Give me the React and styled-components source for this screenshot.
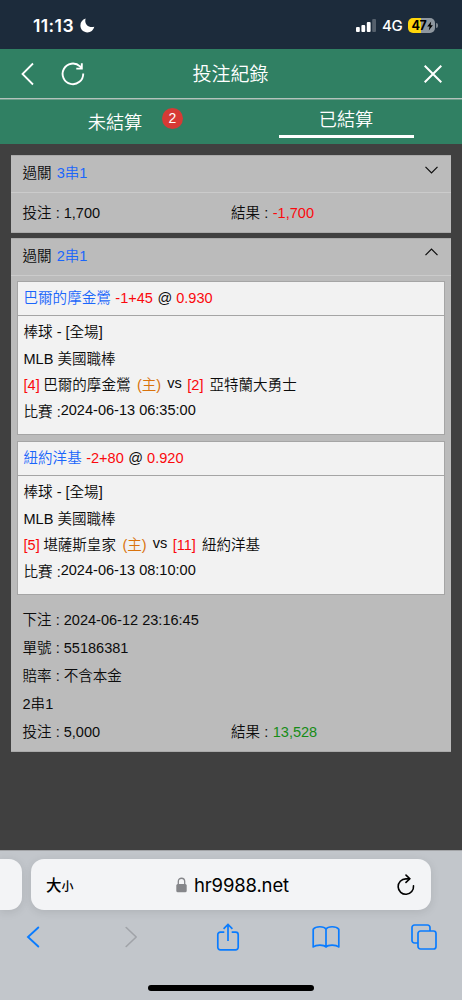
import React from 'react'
import styled, { createGlobalStyle } from 'styled-components'

let GlobalStyle = createGlobalStyle`
  * {
    box-sizing: border-box;
  }

  body {
    margin: 0;
    background: #404040;
    font-family: 'Liberation Sans', 'Noto Sans CJK TC', sans-serif;
    font-size: 14.55px;
    font-weight: 350;
    color: #0c0c0c;
  }

  svg {
    display: block;
    flex: none;
  }
`

let Screen = styled.div`
  width: 462px;
  height: 1000px;
  display: flex;
  flex-direction: column;
  overflow: hidden;
`

/* status bar */

let StatusBar = styled.div`
  height: 49px;
  flex: none;
  padding: 2px 24px 0 33px;
  display: flex;
  align-items: center;
  background: #1c2b3b;
  color: #fff;
  font-family: Inter, sans-serif;
`

let Clock = styled.div`
  width: 46.5px;
  font-size: 17.5px;
  font-weight: 600;
  letter-spacing: 0.4px;
`

let StatusRight = styled.div`
  margin-left: auto;
  display: flex;
  align-items: center;
`

let Network = styled.div`
  width: 26px;
  margin-left: 6px;
  font-size: 15px;
  font-weight: 500;
  letter-spacing: -0.4px;
`

let Battery = styled.div`
  width: 27px;
  height: 15px;
  padding-left: 1px;
  border-radius: 5px;
  display: flex;
  align-items: center;
  justify-content: center;
  background: linear-gradient(90deg, #ffd60a 47%, #8e979f 47%);
  color: #000;
  font-size: 12.5px;
  font-weight: 700;
  letter-spacing: -0.3px;
`

let BatteryTip = styled.div`
  width: 2px;
  height: 5px;
  margin-left: 1px;
  border-radius: 0 2px 2px 0;
  background: #7a848d;
`

/* page header */

let Header = styled.div`
  height: 50px;
  flex: none;
  padding: 0 20px 0 21px;
  display: grid;
  grid-template-columns: 1fr auto 1fr;
  align-items: center;
  background: #308063;
  border-bottom: 1px solid #b4c2bc;
  color: #fff;
`

let HeaderLeft = styled.div`
  display: flex;
  gap: 27px;
`

let HeaderRight = styled.div`
  display: flex;
  justify-content: flex-end;
`

let Title = styled.div`
  padding: 3px 2px 0 0;
  font-size: 19px;
  line-height: 24px;
`

let Tabs = styled.div`
  height: 45px;
  flex: none;
  display: grid;
  grid-template-columns: 1fr 1fr;
  background: #308063;
  border-top: 1px solid #6a9f8a;
  color: #fff;
  font-size: 18.2px;
`

let Tab = styled.div`
  position: relative;
  padding-top: ${p => p.$top}px;
  line-height: 24px;
  text-align: center;
`

let TabLabel = styled.div`
  padding-right: 1px;
`

let Badge = styled.div`
  position: absolute;
  top: 8px;
  left: 162px;
  width: 21px;
  height: 21px;
  border-radius: 50%;
  background: #d63a35;
  font-size: 14px;
  line-height: 21px;
`

let Underline = styled.div`
  width: 135px;
  height: 3px;
  margin: 3px auto 0;
  background: #fff;
`

/* bet cards */

let List = styled.div`
  flex: 1;
  padding: 11px 11px 0;
  display: flex;
  flex-direction: column;
  gap: 5px;
`

let Card = styled.div`
  height: ${p => p.$height}px;
  flex: none;
  background: #bbb;
  border: 1px solid #aaa;
  border-width: 1px 0;
`

let CardHeader = styled.div`
  height: 37px;
  padding: 0 13px 0 11.5px;
  display: flex;
  justify-content: space-between;
  border-bottom: 1px solid #cbcbcb;
  line-height: 35px;
`

let Arrow = styled.div`
  padding-top: 9.5px;
`

let Line = styled.div`
  height: ${p => p.$height}px;
  padding: 0 ${p => p.$pad || 0}px;
  line-height: ${p => p.$height}px;
  display: flex;
  white-space: pre;
`

let Half = styled.div`
  width: 208.5px;
`

let Text = styled.span`
  color: ${p => p.$color || 'inherit'};
  margin-left: ${p => p.$gap || 0}px;
  margin-top: ${p => -(p.$lift || 0)}px;
`

let Summary = styled.div`
  padding-top: 12px;
`

let Matches = styled.div`
  padding: 5.5px 6px 0;
  display: flex;
  flex-direction: column;
  gap: 6px;
`

let Match = styled.div`
  height: 154px;
  background: #f2f2f2;
  border: 1px solid #a5a5a5;
`

let MatchHeader = styled.div`
  height: 34px;
  padding: 0 5.5px;
  border-bottom: 1px solid #a5a5a5;
`

let MatchBody = styled.div`
  padding: 2.8px 5.5px;
`

/* browser chrome */

let Browser = styled.div`
  height: 150px;
  flex: none;
  padding-top: 8px;
  border-top: 1px solid #a2a4a7;
  background: #c2c6cb;
`

let AddressRow = styled.div`
  height: 51px;
  display: flex;
  gap: 9px;
`

let PreviousPage = styled.div`
  width: 22px;
  height: 51px;
  border-radius: 0 13px 13px 0;
  background: #f3f4f6;
  box-shadow: 0 2px 10px rgba(0, 0, 0, 0.1);
`

let Address = styled.div`
  width: 400px;
  height: 51px;
  padding: 0 16px 0 15px;
  border-radius: 13px;
  display: grid;
  grid-template-columns: 130px auto 1fr;
  align-items: center;
  background: #f3f4f6;
  box-shadow: 0 2px 10px rgba(0, 0, 0, 0.1);
`

let TextSize = styled.div`
  padding-top: 3px;
  font-size: 15.5px;
  font-weight: 500;
  line-height: 20px;
  color: #000;

  small {
    font-size: 12px;
  }
`

let Url = styled.div`
  display: flex;
  align-items: center;
  gap: 7px;
  font-family: Inter, sans-serif;
  font-size: 18.5px;
  font-weight: 400;
  letter-spacing: -0.15px;
  color: #000;
`

let Reload = styled.div`
  display: flex;
  justify-content: flex-end;
`

let Toolbar = styled.div`
  height: 54px;
  padding: 0 12px 0 6px;
  display: flex;
  justify-content: space-between;
  align-items: center;
`

let ToolButton = styled.div`
  width: 53px;
  display: flex;
  justify-content: center;
`

let HomeIndicator = styled.div`
  width: 166px;
  height: 6px;
  margin: 21px auto 0;
  border-radius: 3px;
  background: #000;
`

let blue = '#1a66fb'
let red = '#fb090d'
let orange = '#d9730d'
let green = '#168c16'

let bets = [
  { team: '巴爾的摩金鶯', line: '-1+45', odds: '0.930', homeRank: '[4]', home: '巴爾的摩金鶯', awayRank: '[2]', away: '亞特蘭大勇士', time: '2024-06-13 06:35:00' },
  { team: '紐約洋基', line: '-2+80', odds: '0.920', homeRank: '[5]', home: '堪薩斯皇家', awayRank: '[11]', away: '紐約洋基', time: '2024-06-13 08:10:00' },
]

let Icon = ({ w, h, color = 'currentColor', stroke = 2, children }) => (
  <svg
    width={w}
    height={h}
    viewBox={`0 0 ${w} ${h}`}
    fill='none'
    stroke={color}
    strokeWidth={stroke}
  >
    {children}
  </svg>
)

let Amounts = ({ height, stake, result, color }) => (
  <Line $height={height} $pad={11.5}>
    <Half>投注 : {stake}</Half>
    <Text>結果 : </Text>
    <Text $color={color} $gap={0.5}>{result}</Text>
  </Line>
)

let MatchBox = ({ bet }) => (
  <Match>
    <MatchHeader>
      <Line $height={33}>
        <Text $color={blue}>{bet.team}</Text>
        <Text $color={red} $gap={4.5}>{bet.line}</Text>
        <Text $gap={4.5}>@</Text>
        <Text $color={red} $gap={4}>{bet.odds}</Text>
      </Line>
    </MatchHeader>
    <MatchBody>
      <Line $height={26.75}>棒球 - [全場]</Line>
      <Line $height={26.75}>MLB 美國職棒</Line>
      <Line $height={26.75}>
        <Text $color={red}>{bet.homeRank}</Text>
        <Text $gap={3.5}>{bet.home}</Text>
        <Text $color={orange} $gap={6.5}>(主)</Text>
        <Text $gap={6} $lift={2}>vs</Text>
        <Text $color={red} $gap={5.5}>{bet.awayRank}</Text>
        <Text $gap={6}>{bet.away}</Text>
      </Line>
      <Line $height={26.75}>
        <Text>比賽 :</Text>
        <Text $lift={2}>{bet.time}</Text>
      </Line>
    </MatchBody>
  </Match>
)

let App = () => (
  <>
    <GlobalStyle />
    <Screen>
      <StatusBar>
        <Clock>11:13</Clock>
        <svg width='15' height='15' viewBox='0 0 15 15' fill='#fff'>
          <path d='M5.6 .6C4.9 2.9 5.3 5.3 6.8 7C8.7 9 11.5 9.6 14.3 8.7C13.4 12.2 10.8 14.4 7.4 14.4C3.5 14.4 .4 11.4 .4 7.5C.4 4.3 2.4 1.6 5.6 .6Z' />
        </svg>
        <StatusRight>
          <svg width='20' height='13' viewBox='0 0 20 13' fill='#fff'>
            <rect x='0' y='8' width='3.8' height='5' rx='1' />
            <rect x='5.4' y='6' width='3.8' height='7' rx='1' />
            <rect x='10.8' y='3' width='3.8' height='10' rx='1' />
            <rect x='16.2' y='0' width='3.8' height='13' rx='1' opacity='.25' />
          </svg>
          <Network>4G</Network>
          <Battery>
            47
            <svg width='6' height='10' viewBox='0 0 6 10' fill='#000'>
              <path d='M4.2 .5L.2 5.6H2.6L1.8 9.5L5.9 4.2H3.6Z' />
            </svg>
          </Battery>
          <BatteryTip />
        </StatusRight>
      </StatusBar>

      <Header>
        <HeaderLeft>
          <Icon w={13} h={24} stroke={1.8}>
            <path d='M12 1.5L1.5 12L12 22.5' />
          </Icon>
          <Icon w={24} h={24} stroke={1.9}>
            <path d='M22.2 11.5A10.3 10.3 0 1 1 19 4.4L20.8 6.3M20.8 1.3V6.6H15.3' />
          </Icon>
        </HeaderLeft>
        <Title>投注紀錄</Title>
        <HeaderRight>
          <Icon w={18} h={18} stroke={2}>
            <path d='M.7 .7L17.3 17.3M17.3 .7L.7 17.3' />
          </Icon>
        </HeaderRight>
      </Header>
      <Tabs>
        <Tab $top={11}>
          <TabLabel>未結算</TabLabel>
          <Badge>2</Badge>
        </Tab>
        <Tab $top={8}>
          <TabLabel>已結算</TabLabel>
          <Underline />
        </Tab>
      </Tabs>

      <List>
        <Card $height={77.5}>
          <CardHeader>
            <div>過關 <Text $color={blue} $gap={1}>3串1</Text></div>
            <Arrow>
              <Icon w={13} h={8} stroke={1.2}>
                <path d='M.5 .8L6.5 6.8L12.5 .8' />
              </Icon>
            </Arrow>
          </CardHeader>
          <Amounts height={41} stake='1,700' result='-1,700' color={red} />
        </Card>

        <Card $height={514}>
          <CardHeader>
            <div>過關 <Text $color={blue} $gap={1}>2串1</Text></div>
            <Arrow>
              <Icon w={13} h={8} stroke={1.2}>
                <path d='M.5 7.2L6.5 1.2L12.5 7.2' />
              </Icon>
            </Arrow>
          </CardHeader>
          <Matches>
            {bets.map((x, i) => <MatchBox key={i} bet={x} />)}
          </Matches>
          <Summary>
            <Line $height={27.9} $pad={11.5}>下注 : 2024-06-12 23:16:45</Line>
            <Line $height={27.9} $pad={11.5}>單號 : 55186381</Line>
            <Line $height={27.9} $pad={11.5}>賠率 : 不含本金</Line>
            <Line $height={27.9} $pad={11.5}>2串1</Line>
            <Amounts height={27.9} stake='5,000' result='13,528' color={green} />
          </Summary>
        </Card>
      </List>

      <Browser>
        <AddressRow>
          <PreviousPage />
          <Address>
            <TextSize>大<small>小</small></TextSize>
            <Url>
              <svg width='11' height='16' viewBox='0 0 11 16'>
                <path d='M2.3 8V4.4C2.3 .2 8.7 .2 8.7 4.4V8' fill='none' stroke='#85868a' strokeWidth='1.3' />
                <rect x='.3' y='7' width='10.4' height='8.3' rx='1.5' fill='#85868a' />
              </svg>
              hr9988.net
            </Url>
            <Reload>
              <Icon w={18} h={22} color='#000' stroke={1.6}>
                <path d='M16.5 11.8A7.7 7.7 0 1 1 8.8 4.9H12' strokeLinecap='round' />
                <path d='M9 1.1L12.8 4.8L9 8.4' strokeLinecap='round' />
              </Icon>
            </Reload>
          </Address>
        </AddressRow>
        <Toolbar>
          <ToolButton>
            <Icon w={14} h={22} color='#0a7cff' stroke={1.9}>
              <path d='M12.3 1.5L2 11L12.3 20.5' strokeLinecap='round' />
            </Icon>
          </ToolButton>
          <ToolButton>
            <Icon w={14} h={22} color='#a0a3a8' stroke={1.6}>
              <path d='M3.2 1.5L13.2 11L3.2 20.5' strokeLinecap='round' />
            </Icon>
          </ToolButton>
          <ToolButton>
            <Icon w={24} h={28} color='#0a7cff' stroke={1.7}>
              <path d='M8.3 9.2H4.3A2.5 2.5 0 0 0 1.8 11.7V24.3A2.5 2.5 0 0 0 4.3 26.8H19.7A2.5 2.5 0 0 0 22.2 24.3V11.7A2.5 2.5 0 0 0 19.7 9.2H15.7M12 18V1.5M7.6 5.8L12 1.4L16.4 5.8' />
            </Icon>
          </ToolButton>
          <ToolButton>
            <Icon w={28} h={24} color='#0a7cff' stroke={1.7}>
              <path d='M14 4.2C12 .9 3.8 .9 1.2 4.2V22C4 19.4 12 19.4 14 22C16 19.4 24 19.4 26.8 22V4.2C24.2 .9 16 .9 14 4.2V22' strokeLinejoin='round' />
            </Icon>
          </ToolButton>
          <ToolButton>
            <Icon w={26} h={26} color='#0a7cff' stroke={1.7}>
              <path d='M7 19H3.5A2.5 2.5 0 0 1 1 16.5V3.5A2.5 2.5 0 0 1 3.5 1H16.5A2.5 2.5 0 0 1 19 3.5V7' />
              <rect x='7' y='7' width='18' height='18' rx='2.5' />
            </Icon>
          </ToolButton>
        </Toolbar>
        <HomeIndicator />
      </Browser>
    </Screen>
  </>
)

export default App
